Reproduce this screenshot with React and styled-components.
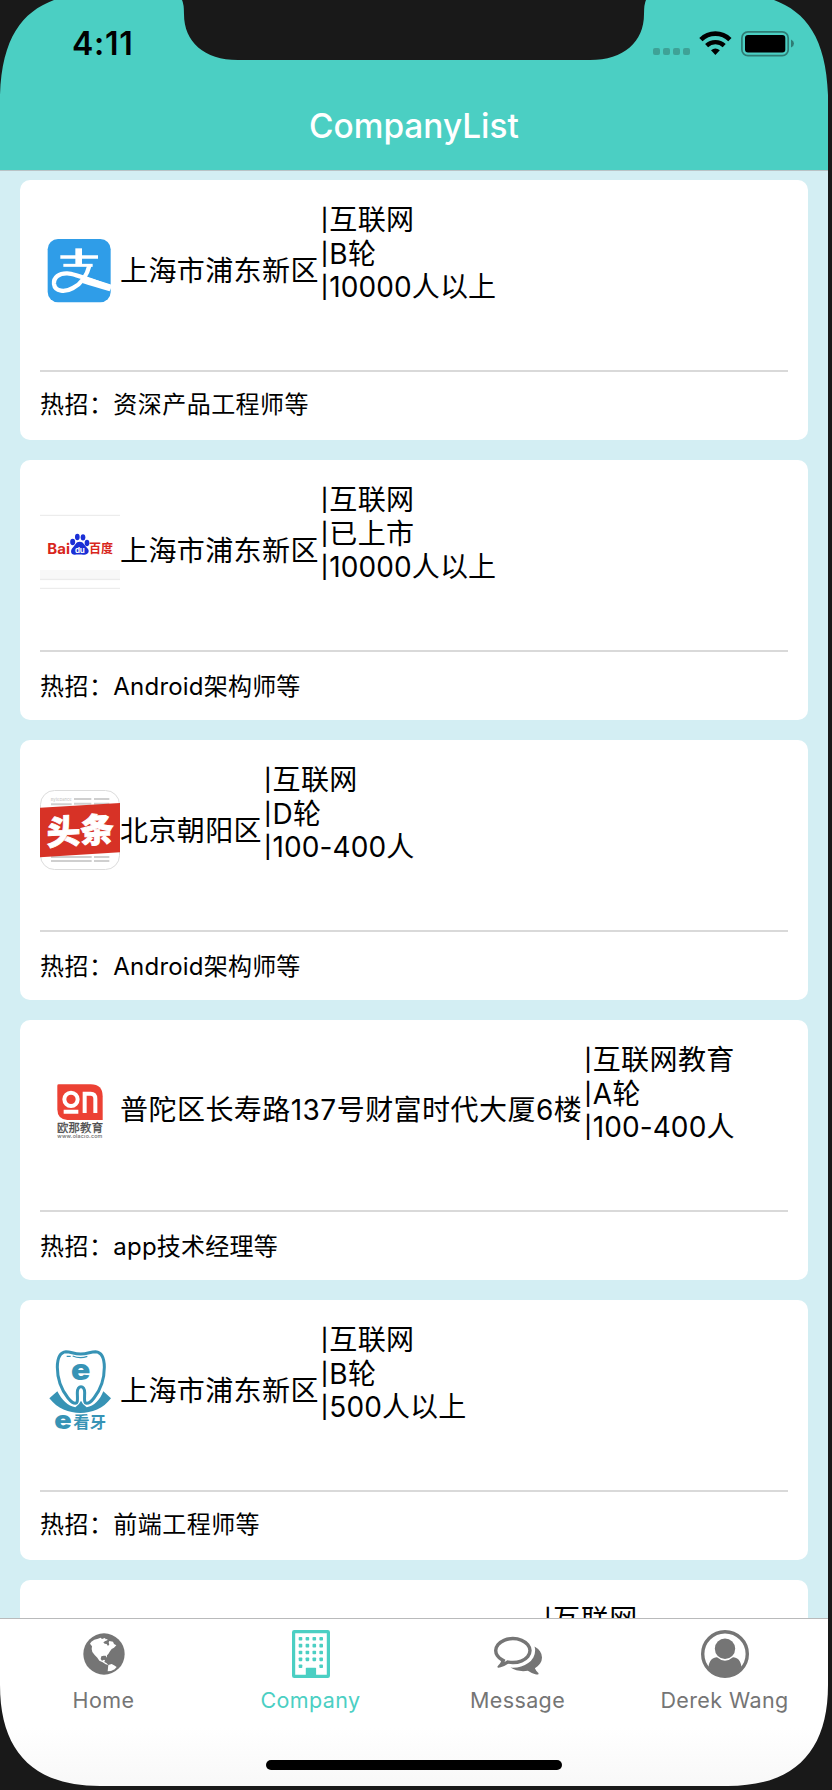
import React from "react";
import styled, { createGlobalStyle } from "styled-components";

const TEAL = "#4bcfc3";
const INK = "#191919";
const GREY = "#757575";

const GlobalStyle = createGlobalStyle`
  * { box-sizing: border-box; }
  html, body { margin: 0; background: ${INK}; }
  body { font-family: Inter, "Noto Sans CJK SC", sans-serif; color: #000; }
`;

const Phone = styled.main`
  position: relative;
  display: flex;
  flex-direction: column;
  width: 828px;
  height: 1786px;
  overflow: hidden;
  background: #d3eef3;
`;

const Bezel = styled.svg`
  position: absolute;
  inset: 0;
  pointer-events: none;
  fill: ${INK};
`;

const Header = styled.header`
  flex: none;
  display: flex;
  flex-direction: column;
  height: 171px;
  background: ${TEAL};
  border-bottom: 1px solid #b9c3c6;
`;

const StatusBar = styled.div`
  display: flex;
  justify-content: space-between;
  height: 88px;
  padding: 31px 34px 0 72px;
`;

const Time = styled.span`
  font-size: 32px;
  font-weight: 600;
  line-height: 26px;
  letter-spacing: 0.7px;
`;

const StatusIcons = styled.svg`
  width: 142px;
  height: 26px;
`;

const Title = styled.h1`
  margin: 0;
  text-align: center;
  color: #fff;
  font-size: 33.4px;
  font-weight: 500;
  line-height: 76px;
  letter-spacing: 0;
`;

const List = styled.section`
  flex: 1;
  min-height: 0;
  overflow: hidden;
  display: flex;
  flex-direction: column;
  gap: 20px;
  padding: 9px 20px 0;
`;

const Card = styled.article`
  flex: none;
  height: 260px;
  padding: 20px;
  border-radius: 10px;
  background: #fff;
`;

const Summary = styled.div`
  display: flex;
  height: 172px;
  border-bottom: 2px solid #d9d9d9;
`;

const Logo = styled.svg`
  flex: none;
  width: 80px;
  height: 80px;
  margin-top: 30px;
  overflow: visible;
`;

const Address = styled.p`
  flex: none;
  min-width: ${(p) => p.$minWidth || 0}px;
  margin: 0;
  font-size: 28px;
  line-height: ${(p) => (p.$mixed ? 140 : 142)}px;
  letter-spacing: ${(p) => (p.$mixed ? 0.46 : 0.4)}px;
  white-space: nowrap;
`;

const Facts = styled.ul`
  margin: 4px 0 0;
  padding: 0;
  list-style: none;
  font-size: 28px;
  line-height: 33.5px;
  white-space: nowrap;
`;

const Fact = styled.li`
  display: flex;
  letter-spacing: ${(p) => (p.$numeric ? 0.1 : 0.4)}px;
`;

const Bar = styled.span`
  width: 10.5px;
  padding-left: 1px;
  text-align: center;
  font-size: 22px;
  font-weight: 500;
  letter-spacing: 0;
`;

const Hiring = styled.p`
  margin: ${(p) => (p.$latin ? 17 : 15)}px 0 0;
  font-size: 24px;
  line-height: 36px;
  letter-spacing: 0.45px;
`;

const Job = styled.span`
  letter-spacing: ${(p) => (p.$latin ? 0.2 : 0.45)}px;
`;

const TabBar = styled.nav`
  flex: none;
  display: flex;
  flex-direction: column;
  justify-content: space-between;
  height: 168px;
  padding-bottom: 16px;
  border-top: 1px solid #b9babb;
  background: linear-gradient(#fff 65%, #f8f8f8);
`;

const Tabs = styled.div`
  display: grid;
  grid-template-columns: repeat(4, 1fr);
  padding-top: 11px;
`;

const Tab = styled.a`
  display: flex;
  flex-direction: column;
  align-items: center;
  gap: 8px;
  color: ${(p) => (p.$active ? TEAL : GREY)};
  font-size: 21.5px;
  line-height: 28px;
  letter-spacing: 0.4px;
`;

const TabIcon = styled.svg`
  width: 48px;
  height: 48px;
  fill: currentColor;
`;

const HomeIndicator = styled.div`
  align-self: center;
  width: 296px;
  height: 10px;
  border-radius: 5px;
  background: #000;
`;

const LogoText = styled.text`
  font-family: Inter, "Noto Sans CJK SC", sans-serif;
  font-weight: ${(p) => p.$weight || 700};
`;

const AlipayLogo = () => (
  <Logo viewBox="0 0 240 240">
    <rect x="23" y="27" width="189" height="190" rx="31" fill="#2f9de8" />
    <g fill="none" stroke="#fff">
      <path d="M116 55V106" strokeWidth="20" />
      <path d="M61 81H174" strokeWidth="10" />
      <path d="M70 106H158" strokeWidth="9" />
      <path d="M149 104C141 136 122 162 99 174C76 187 45 186 42 162C40 142 58 129 82 130C108 131 142 148 213 173" strokeWidth="13" />
      <path d="M130 149Q165 160 212 174" strokeWidth="21" />
    </g>
  </Logo>
);

const BaiduLogo = () => (
  <Logo viewBox="0 0 240 240">
    <path d="M0 180H240V211H0Z" fill="#f8f8f8" />
    <path d="M0 16H240M0 208H240M0 235H240" stroke="#e8e8e8" strokeWidth="3" />
    <g fill="#d8261c">
      <LogoText x="22" y="131" fontSize="44" textLength="68" lengthAdjust="spacingAndGlyphs">Bai</LogoText>
      <LogoText x="147" y="130" fontSize="37" textLength="72" lengthAdjust="spacingAndGlyphs">百度</LogoText>
    </g>
    <g fill="#1a2fd6">
      <ellipse cx="98" cy="96" rx="7.5" ry="9.5" />
      <ellipse cx="112" cy="81" rx="7" ry="9.5" />
      <ellipse cx="129" cy="82" rx="7" ry="9.5" />
      <ellipse cx="141" cy="99" rx="7" ry="9.5" />
      <path d="M119 95C131 95 133 106 141 113C151 122 145 134 133 134C126 134 112 133 105 134C92 135 90 121 98 113C106 106 107 95 119 95Z" />
    </g>
    <LogoText x="105" y="128" fontSize="24" fill="#fff" textLength="29">du</LogoText>
  </Logo>
);

const ToutiaoLogo = () => (
  <Logo viewBox="0 0 240 240">
    <rect x="1.5" y="1.5" width="237" height="237" rx="42" fill="#fff" stroke="#dcdcdc" strokeWidth="3" />
    <LogoText x="32" y="33" fontSize="12" fill="#c8c8c8" $weight={500} textLength="63">ByteDance</LogoText>
    <path d="M33 43H95M102 27H154M162 27H208M102 41H154M162 41H208M33 201H155M162 201H208M33 213H155M162 213H208" stroke="#cfcfcf" strokeWidth="6" />
    <path d="M0 53L240 39V187L0 202Z" fill="#d73226" />
    <g transform="translate(20 166) skewY(-3.5)">
      <LogoText fontSize="101" $weight={900} fill="#fff" stroke="#fff" strokeWidth="2.5">头条</LogoText>
    </g>
  </Logo>
);

const OnLogo = () => (
  <Logo viewBox="0 0 240 240">
    <path d="M52 47Q52 43 56 43H152Q188 43 188 79V150H82Q52 148 52 118Z" fill="#ec4134" />
    <g fill="none" stroke="#fff" strokeWidth="12">
      <circle cx="93" cy="88" r="20" />
      <path d="M71 125H115M134 129V71H152Q166 71 166 86V129" />
    </g>
    <LogoText x="51" y="186" fontSize="34" fill="#4a4a4a" $weight={400} stroke="#4a4a4a" strokeWidth="0.8" textLength="138">欧那教育</LogoText>
    <LogoText x="52" y="203" fontSize="16" fill="#666" $weight={500} textLength="135">www.olacio.com</LogoText>
  </Logo>
);

const ToothLogo = () => (
  <Logo viewBox="0 0 240 240">
    <path d="M28 145L52 124C65 150 84 168 106 172Q118 164 123 152Q128 164 140 172C162 168 180 150 190 124L213 145C190 176 155 189 121 189S52 176 28 145Z" fill="#3793b5" />
    <path d="M122 12C100 12 94 5 78 5C56 7 52 28 52 52C52 92 68 124 84 144C92 154 100 160 106 160C115 160 112 143 112 128C112 104 134 104 134 128C134 143 131 160 140 160C148 160 156 152 162 144C178 124 193 92 193 52C193 28 189 7 167 5C150 5 144 12 122 12Z" fill="#fff" stroke="#3793b5" strokeWidth="9" />
    <path d="M80 19H92M98 18Q120 27 142 19" fill="none" stroke="#3793b5" strokeWidth="4" />
    <g fill="#3793b5">
      <LogoText x="93" y="90" fontSize="88" $weight={900} textLength="58" lengthAdjust="spacingAndGlyphs">e</LogoText>
      <LogoText x="43" y="238" fontSize="78" $weight={900} textLength="52" lengthAdjust="spacingAndGlyphs">e</LogoText>
      <LogoText x="100" y="235" fontSize="49">看牙</LogoText>
    </g>
  </Logo>
);

const GlobeIcon = () => (
  <TabIcon viewBox="-10 -10 144 144">
    <circle cx="62" cy="62" r="62" />
    <path fill="#fff" d="M20 31L24 25L33 19L44 16L52 13L56 17L62 15L65 14L67 18L72 17L72 21L66 23L60 27L64 31L70 32L74 38L78 33L76 28L78 23L89 25L92 32L99 36L92 43L85 47L80 54L75 62L71 66L71 73L67 67L61 67L54 69L52 77L56 82L62 79L65 81L63 86L70 90L75 95L67 93L58 87L48 82L42 73L34 65L27 56L25 47L26 39Z M75 95L85 92L92 96L100 101L94 108L83 113L73 114L74 104Z" />
  </TabIcon>
);

const WINDOWS = [0, 1, 2, 3, 4].flatMap((row) =>
  (row < 4 ? [0, 1, 2, 3] : [0, 3]).map((col) => ({ x: 11.7 + col * 6.9, y: 7 + row * 6.85 }))
);

const BuildingIcon = () => (
  <TabIcon viewBox="0 0 48 48">
    <rect x="6.6" y="1.6" width="34.8" height="44.8" rx="0.6" fill="none" stroke="currentColor" strokeWidth="3.2" />
    {WINDOWS.map(({ x, y }) => (
      <rect key={`${x}-${y}`} x={x} y={y} width="3.6" height="3.6" rx="0.8" />
    ))}
    <path d="M18.8 46V38.4Q18.8 37.7 19.5 37.7H28.4Q29.1 37.7 29.1 38.4V46Z" />
  </TabIcon>
);

const CommentsIcon = () => (
  <TabIcon viewBox="0 0 1792 1792">
    <path d="M704 384q-153 0-286 52t-211.5 141-78.5 191q0 82 53 158t149 132l97 56-35 84q34-20 62-39l44-31 53 10q78 14 153 14 153 0 286-52t211.5-141 78.5-191-78.5-191-211.5-141-286-52zm0-128q191 0 353.5 68.5t256.5 186.5 94 257-94 257-256.5 186.5-353.5 68.5q-86 0-176-16-124 88-278 128-36 9-86 16h-3q-11 0-20.5-8t-11.5-21q-1-3-1-6.5t.5-6.5 2-6l2.5-5 3.5-5.5 4-5 4.5-5 4-4.5q5-6 23-25t26-29.5 22.5-29 25-38.5 20.5-44q-124-72-195-177t-71-224q0-139 94-257t256.5-186.5 353.5-68.5zm822 1169q10 24 20.5 44t25 38.5 22.5 29 26 29.5 23 25q1 1 4 4.5t4.5 5 4 5 3.5 5.5l2.5 5 2 6 .5 6.5-1 6.5q-3 14-13 22t-22 7q-50-7-86-16-154-40-278-128-90 16-176 16-271 0-472-132 58 4 88 4 161 0 309-45t264-129q125-92 192-212t67-254q0-77-23-152 129 71 204 178t75 230q0 120-71 224.5t-195 176.5z" />
  </TabIcon>
);

const UserIcon = () => (
  <TabIcon viewBox="0 0 48 48">
    <circle cx="24" cy="24" r="22.3" fill="none" stroke="currentColor" strokeWidth="3.4" />
    <circle cx="24" cy="18.8" r="10.2" />
    <path d="M7.6 37C8 31 11.5 27.3 16 27.3Q20 30.7 24 30.7T32 27.3C36.5 27.3 40 31 40.4 37Q34 46.5 24 46.5T7.6 37Z" />
  </TabIcon>
);

const COMPANIES = [
  { Mark: AlipayLogo, address: "上海市浦东新区", facts: ["互联网", "B轮", "10000人以上"], job: "资深产品工程师等" },
  { Mark: BaiduLogo, address: "上海市浦东新区", facts: ["互联网", "已上市", "10000人以上"], job: "Android架构师等", latin: true },
  { Mark: ToutiaoLogo, address: "北京朝阳区", facts: ["互联网", "D轮", "100-400人"], job: "Android架构师等", latin: true },
  { Mark: OnLogo, address: "普陀区长寿路137号财富时代大厦6楼", mixed: true, facts: ["互联网教育", "A轮", "100-400人"], job: "app技术经理等", latin: true },
  { Mark: ToothLogo, address: "上海市浦东新区", facts: ["互联网", "B轮", "500人以上"], job: "前端工程师等" },
  { Mark: Logo, addressWidth: 422, facts: ["互联网"] },
];

const TABS = [
  { label: "Home", Icon: GlobeIcon },
  { label: "Company", Icon: BuildingIcon, active: true },
  { label: "Message", Icon: CommentsIcon },
  { label: "Derek Wang", Icon: UserIcon },
];

export default function App() {
  return (
    <>
      <GlobalStyle />
      <Phone>
        <Header>
          <StatusBar>
            <Time>4:11</Time>
            <StatusIcons viewBox="0 0 142 26">
              <g fill="#3ea297">
                <rect x="1" y="17" width="7" height="7" rx="2" />
                <rect x="11" y="17" width="7" height="7" rx="2" />
                <rect x="21" y="17" width="7" height="7" rx="2" />
                <rect x="31" y="17" width="7" height="7" rx="2" />
              </g>
              <g fill="none" stroke="#000">
                <path d="M48.9 8.6A20.5 20.5 0 0 1 77.9 8.6" strokeWidth="4.6" />
                <path d="M54.6 14.6A12.8 12.8 0 0 1 72.2 14.6" strokeWidth="4.4" />
              </g>
              <path d="M59 19.3Q63.4 15.9 67.8 19.3L63.4 24Z" />
              <rect x="89.9" y="0.9" width="46.3" height="23.8" rx="6" fill="none" stroke="#2f7c74" strokeWidth="1.7" />
              <rect x="93" y="4" width="40.3" height="17.5" rx="3" />
              <path d="M139 8.5Q142 10 142 12.5T139 16.5Z" fill="#2f7c74" />
            </StatusIcons>
          </StatusBar>
          <Title>CompanyList</Title>
        </Header>

        <List>
          {COMPANIES.map(({ Mark, address, addressWidth, mixed, facts, job, latin }, i) => (
            <Card key={i}>
              <Summary>
                <Mark />
                <Address $minWidth={addressWidth} $mixed={mixed}>{address}</Address>
                <Facts>
                  {facts.map((fact) => (
                    <Fact key={fact} $numeric={/^\d/.test(fact)}>
                      <Bar>|</Bar>
                      {fact}
                    </Fact>
                  ))}
                </Facts>
              </Summary>
              {job && (
                <Hiring $latin={latin}>
                  热招：<Job $latin={latin}>{job}</Job>
                </Hiring>
              )}
            </Card>
          ))}
        </List>

        <TabBar>
          <Tabs>
            {TABS.map(({ label, Icon, active }) => (
              <Tab key={label} $active={active}>
                <Icon />
                {label}
              </Tab>
            ))}
          </Tabs>
          <HomeIndicator />
        </TabBar>

        <Bezel width="828" height="1786" viewBox="0 0 828 1786">
          <path d="M0 0H54C22 12 2 38 0 95Z" />
          <path d="M828 0H774C806 12 826 38 828 95Z" />
          <path d="M182 0Q184 4 184 14C184 42 204 60 238 60H590C624 60 644 42 644 14Q644 4 646 0Z" />
          <path d="M0 1685C0 1752 34 1786 100 1786H0Z" />
          <path d="M828 1685C828 1752 794 1786 728 1786H828Z" />
        </Bezel>
      </Phone>
    </>
  );
}
